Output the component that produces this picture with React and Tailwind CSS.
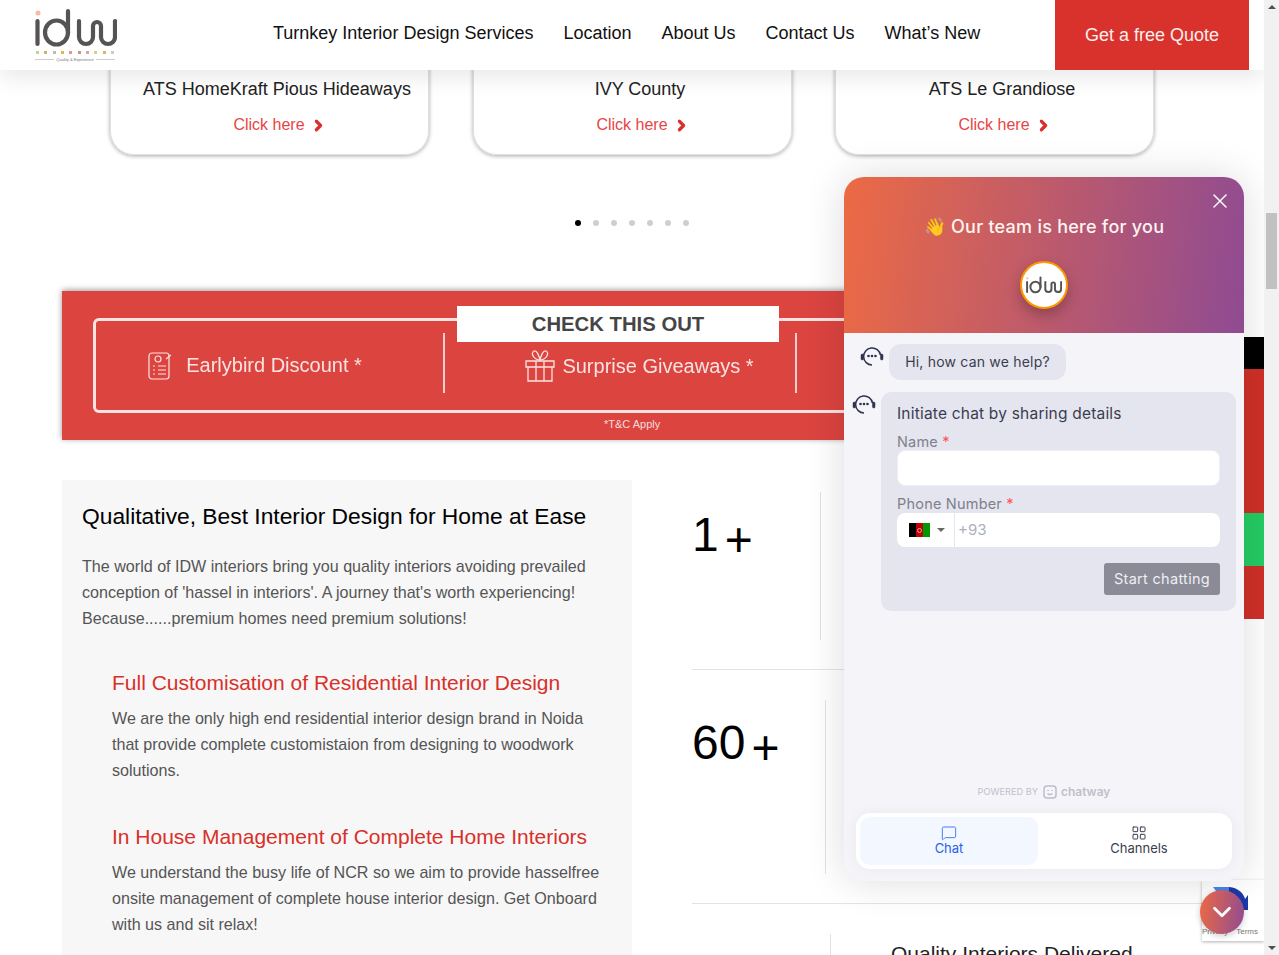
import { ChevronRight, ChevronDown, X, MessageSquare, LayoutGrid } from 'lucide-react';

const sans = "font-['Liberation_Sans',Arial,sans-serif]";
const chatFont = "font-['Inter','Noto_Sans',sans-serif]";

const navItems = ['Turnkey Interior Design Services', 'Location', 'About Us', 'Contact Us', 'What’s New'];
const projects = ['ATS HomeKraft Pious Hideaways', 'IVY County', 'ATS Le Grandiose'];

const IdwLogo = ({ className, strokeWidth = 4.2 }) => (
  <svg viewBox="0 0 82 40" className={className} fill="none" stroke="#555353" strokeWidth={strokeWidth} strokeLinecap="round">
    <circle cx="3" cy="5" r="2.500" fill="#f8b9a5" stroke="none" />
    <path d="M2.500 13v23" />
    <path d="M33 3v22" />
    <ellipse cx="21.500" cy="24.500" rx="11.500" ry="12" />
    <path d="M44 13v16a7 7 0 0 0 14 0V18a4 4 0 0 1 8 0v11a7 7 0 0 0 14 0V13" />
  </svg>
);

const Agent = ({ className }) => (
  <svg viewBox="0 0 24 24" className={className} fill="none" stroke="#2d3350">
    <path d="M20.500 11A8.500 8.500 0 1 0 12 21" strokeWidth="1.500" />
    <rect x="1" y="10" width="2.500" height="6" rx="1.200" fill="#2d3350" strokeWidth="0.500" />
    <rect x="20.500" y="10" width="2.500" height="6" rx="1.200" fill="#2d3350" strokeWidth="0.500" />
    <circle cx="8.500" cy="12" r="1.300" fill="#2d3350" stroke="none" />
    <circle cx="12" cy="12" r="1.300" fill="#2d3350" stroke="none" />
    <circle cx="15.500" cy="12" r="1.300" fill="#2d3350" stroke="none" />
  </svg>
);

const Stat = ({ value, line, title, className }) => (
  <div className={`flex ${className}`}>
    <div className={`flex items-start text-[48px] leading-none text-black ${line}`}>
      {value && <span className="mt-[19px]">{value}</span>}
      {value && <span className="ml-[6px] mt-[24px]">+</span>}
    </div>
    <div className="w-px h-full bg-[#e1e1e1]" />
    {title && <div className="ml-[60px] text-[21px] text-[#222] mt-[8px] leading-[24px]">{title}</div>}
  </div>
);

const Feature = ({ title, children, className }) => (
  <div className={`pl-[30px] pr-[10px] ${className}`}>
    <h4 className="text-[21px] leading-[26px] text-[#d9302a]">{title}</h4>
    <p className="mt-[9px] text-[16.100px] leading-[26px] text-[#555]">{children}</p>
  </div>
);

const ChatWidget = () => (
  <div className={`absolute left-[844px] top-[177px] z-30 flex h-[704px] w-[400px] flex-col overflow-hidden rounded-[20px] bg-[#f5f5f9] shadow-[0_0_40px_rgba(0,0,0,0.14)] ${chatFont}`}>
    <div className="relative flex h-[156px] shrink-0 flex-col items-center bg-[linear-gradient(97deg,#ec6a44,#8f4b92)]">
      <X className="absolute right-[12px] top-[12px] text-white" size={24} strokeWidth={1.500} />
      <div className="mt-[38px] text-[18px] leading-[24px] font-medium tracking-[0.25px] text-[#fdf3f1]">👋 Our team is here for you</div>
      <div className="mt-[22px] flex h-[48px] w-[48px] items-center justify-center rounded-full border-2 border-[#ff9800] bg-white shadow-[0_6px_14px_rgba(0,0,0,0.25)]">
        <IdwLogo className="h-[18px] w-[36px]" strokeWidth={4.500} />
      </div>
    </div>
    <div className="flex items-start pl-[16px] pt-[11px]">
      <Agent className="h-[24px] w-[24px]" />
      <div className="ml-[5px] flex h-[36px] w-[177px] items-center justify-center rounded-[12px] bg-[#e5e5ef] pb-[1px] text-[14px] tracking-[0.2px] text-[#3b3d4f]">Hi, how can we help?</div>
    </div>
    <div className="mt-[12px] flex items-start pl-[8px]">
      <Agent className="h-[24px] w-[24px]" />
      <div className="ml-[5px] h-[219px] w-[355px] rounded-[10px] bg-[#e5e5ef] px-[16px] pt-[12px]">
        <div className="text-[15.500px] leading-[20px] tracking-[0.2px] text-[#3b3d4f]">Initiate chat by sharing details</div>
        <div className="mt-[8px] text-[14.500px] leading-[20px] tracking-[0.2px] text-[#80808a]">Name <span className="text-[#f55]">*</span></div>
        <div className="-mt-[2px] h-[36px] rounded-[8px] border border-[#eeeef5] bg-white" />
        <div className="mt-[8px] text-[14.500px] leading-[20px] tracking-[0.2px] text-[#80808a]">Phone Number <span className="text-[#f55]">*</span></div>
        <div className="-mt-[1px] flex h-[34px] rounded-[8px] bg-white">
          <div className="flex w-[58px] items-center border-r border-[#e5e5ef] pl-[12px]">
            <div className="flex h-[14px] w-[21px] items-center">
              <div className="h-full w-[7px] bg-black" />
              <div className="flex h-full w-[7px] items-center justify-center bg-[#be0000]">
                <span className="h-[5px] w-[5px] rounded-full border border-[#e9a0a0]" />
              </div>
              <div className="h-full w-[7px] bg-[#009a00]" />
            </div>
            <div className="ml-[7px] h-0 w-0 border-x-[4px] border-t-[4px] border-x-transparent border-t-[#666]" />
          </div>
          <div className="ml-[3px] flex items-center text-[15px] text-[#aeaec0]">+93</div>
        </div>
        <div className="mt-[16px] flex justify-end">
          <div className="flex h-[32px] w-[116px] items-center justify-center rounded-[3px] bg-[#8a8b97] text-[14.500px] tracking-[0.3px] text-[#eeeef3]">Start chatting</div>
        </div>
      </div>
    </div>
    <div className="mt-auto flex items-center justify-center text-[#c0c0cb]">
      <span className="text-[9.200px]">POWERED BY</span>
      <svg viewBox="0 0 16 16" className="ml-[4px] h-[16px] w-[16px]" fill="none" stroke="#bdbdc9" strokeWidth="1.500">
        <rect x="2" y="2" width="12" height="12" rx="3" />
        <path d="M5.500 9.500c1.500 1.300 3.500 1.300 5 0" />
        <path d="M6 6v1M10 6v1" />
      </svg>
      <span className="ml-[3px] text-[12px] font-semibold">chatway</span>
    </div>
    <div className="mx-[12px] mb-[12px] mt-[12px] flex h-[56px] rounded-[14px] bg-white p-[4px] shadow-[0_0_14px_rgba(0,0,0,0.05)]">
      <div className="flex w-[178px] flex-col items-center justify-center rounded-[10px] bg-[#f3f7ff] pb-[2px] text-[13px] leading-[15px] text-[#2563eb]">
        <MessageSquare size={16} strokeWidth={1.500} className="text-[#4a7df0]" />
        <span>Chat</span>
      </div>
      <div className="flex flex-1 flex-col items-center justify-center pb-[2px] pl-[12px] text-[13px] leading-[15px] text-[#3b3d4f]">
        <LayoutGrid size={16} strokeWidth={1.500} />
        <span>Channels</span>
      </div>
    </div>
  </div>
);

export default function App() {
  return (
    <div className={`flex h-[955px] w-[1279px] overflow-hidden bg-white ${sans}`}>
      <div className="relative h-full w-[1264px] shrink-0 overflow-hidden">
        <header className="relative z-20 flex h-[70px] items-center bg-white pr-[15px] shadow-[0_6px_24px_rgba(0,0,0,0.1)]">
          <div className="ml-[35px] flex w-[238px] flex-col self-start pt-[8px]">
            <IdwLogo className="h-[40px] w-[82px]" />
            <div className="mt-[3px] flex w-[80px] justify-between px-[1px]">
              {['#c5cf9a', '#c9b86a', '#bbb', '#e8b24e', '#d99', '#b99', '#caa', '#ecc97a', '#ddb45f', '#ccc'].map((c, i) => (
                <span key={i} className="h-[3px] w-[3px]" style={{ backgroundColor: c }} />
              ))}
            </div>
            <div className="mt-[3px] flex w-[80px] items-center gap-[2px] text-[4px] leading-[5px] text-[#777]">
              <span className="h-px flex-1 bg-[#ccc]" />
              Quality &amp; Experience
              <span className="h-px flex-1 bg-[#ccc]" />
            </div>
          </div>
          <nav className="mb-[4px] flex gap-[30px] text-[18px] text-[#111]">
            {navItems.map((n) => <span key={n}>{n}</span>)}
          </nav>
          <div className="ml-auto flex h-full w-[194px] items-center justify-center bg-[#d9322c] text-[18px] text-[#fbeeee]">Get a free Quote</div>
        </header>

        <section className="flex pl-[110px]">
          {projects.map((p, i) => (
            <div key={p} className={`-mt-[40px] flex h-[125px] w-[319px] flex-col items-center justify-end rounded-[24px] border border-[#e0e0e0] pb-[19px] pl-[15px] shadow-[0_1px_4px_rgba(0,0,0,0.35)] ${i === 0 ? '' : i === 1 ? 'ml-[44px]' : 'ml-[43px]'}`}>
              <div className="text-[18px] leading-[22px] text-[#222]">{p}</div>
              <div className="ml-[6px] mt-[15px] flex items-center text-[16px] leading-[20px] text-[#e84545]">
                Click here
                <ChevronRight size={17} strokeWidth={4.500} className="ml-[5px] text-[#d9302a]" />
              </div>
            </div>
          ))}
        </section>

        <div className="mt-[65px] flex w-[1264px] justify-center gap-[12px]">
          {[0, 1, 2, 3, 4, 5, 6].map((d) => (
            <span key={d} className={`h-[6px] w-[6px] rounded-full ${d === 0 ? 'bg-black' : 'bg-[#cfcfcf]'}`} />
          ))}
        </div>

        <div className="mx-[62px] mt-[65px] h-[149px] w-[1140px] bg-[#dc4440] px-[31px] pt-[27px] shadow-[0_-1px_6px_rgba(0,0,0,0.4)]">
          <div className="relative flex h-[95px] items-center rounded-[6px] border-[3px] border-[#f7e4e2]">
            <div className="absolute left-[361px] top-[-15px] flex h-[36px] w-[322px] items-center justify-center bg-white text-[20.300px] font-bold text-[#454545]">CHECK THIS OUT</div>
            <div className="mb-[6px] flex h-[60px] w-[349px] items-center justify-center border-r-2 border-[#f0cfcc] pr-[30px] pt-[4px] text-[20px] text-[#f9e4e2] blur-[0.3px]">
              <svg viewBox="0 0 26 30" className="mr-[13px] h-[30px] w-[26px]" fill="none" stroke="#f9e4e2" strokeWidth="1.200">
                <rect x="2" y="3" width="20" height="26" rx="3" />
                <circle cx="11" cy="9" r="3" />
                <path d="M6 16h2M6 20h2M6 24h2M11 16h8M11 20h8M11 24h8M19 9l5-4" />
              </svg>
              Earlybird Discount *
            </div>
            <div className="mb-[6px] flex h-[60px] w-[352px] items-center justify-center border-r-2 border-[#f0cfcc] pl-[38px] pt-[6px] text-[20px] text-[#f9e4e2] blur-[0.3px]">
              <svg viewBox="0 0 32 34" className="mr-[6px] h-[34px] w-[32px]" fill="none" stroke="#f9e4e2" strokeWidth="1.300">
                <path d="M2 12h28v6H2zM4 18h24v14H4zM12 12v20M20 12v20" />
                <path d="M16 11C10 11 6 4 10 2c3-1 5 5 6 9 1-4 3-10 6-9 4 2 0 9-6 9z" />
              </svg>
              Surprise Giveaways *
            </div>
          </div>
          <div className="mt-[4px] pl-[511px] text-[11px] leading-[14px] text-[#f7dedc]">*T&amp;C Apply</div>
        </div>

        <div className="mx-[62px] mt-[40px] flex w-[1140px] items-start">
          <div className="h-[600px] w-[570px] shrink-0 bg-[#f7f7f7] px-[20px] pt-[22px]">
            <h3 className="text-[22.800px] leading-[28px] text-black">Qualitative, Best Interior Design for Home at Ease</h3>
            <p className="mt-[23px] text-[16.100px] leading-[26px] text-[#555]">
              The world of IDW interiors bring you quality interiors avoiding prevailed conception of 'hassel in interiors'. A journey that's worth experiencing! Because......premium homes need premium solutions!
            </p>
            <Feature title="Full Customisation of Residential Interior Design" className="mt-[39px]">
              We are the only high end residential interior design brand in Noida that provide complete customistaion from designing to woodwork solutions.
            </Feature>
            <Feature title="In House Management of Complete Home Interiors" className="mt-[41px]">
              We understand the busy life of NCR so we aim to provide hasselfree onsite management of complete house interior design. Get Onboard with us and sit relax!
            </Feature>
          </div>
          <div className="ml-[60px] w-[510px]">
            <Stat value="1" line="w-[128px]" className="mt-[12px] h-[148px]" />
            <div className="mt-[29px] h-px bg-[#e3e3e3]" />
            <Stat value="60" line="w-[133px]" className="mt-[30px] h-[174px]" />
            <div className="mt-[29px] h-px bg-[#e3e3e3]" />
            <Stat line="w-[138px]" className="mt-[30px] h-[100px]" title="Quality Interiors Delivered" />
          </div>
        </div>

        <div className="absolute right-0 top-[337px] z-10 flex w-[20px] flex-col">
          <div className="h-[32px] bg-black" />
          <div className="h-[144px] bg-[#cf3028]" />
          <div className="h-[53px] bg-[#25cc64]" />
          <div className="h-[53px] bg-[#cf3028]" />
        </div>

        <div className="absolute left-[1202px] top-[880px] z-10 h-[61px] w-[62px] bg-white shadow-[0_1px_3px_rgba(0,0,0,0.3)]">
          <svg viewBox="0 0 40 30" className="ml-[10px] mt-[5px] h-[30px] w-[40px]">
            <path d="M1 2h17v8H7z" fill="#4a86f0" />
            <path d="M17 2c10 1 15 7 16 12l3-4v15H22l5-5c-2-6-6-9-10-10z" fill="#1c3aa9" />
          </svg>
          <div className="absolute bottom-[4px] left-0 flex w-full justify-between pr-[6px] text-[8px] leading-[10px] text-[#777]">
            <span>Privacy</span><span>Terms</span>
          </div>
        </div>

        <ChatWidget />

        <div className="absolute left-[1200px] top-[890px] z-30 flex h-[44px] w-[44px] items-center justify-center rounded-full bg-[linear-gradient(97deg,#ec6a44,#8f4b92)] shadow-[0_2px_6px_rgba(0,0,0,0.2)]">
          <ChevronDown className="text-white" size={30} strokeWidth={2.200} />
        </div>
      </div>

      <div className="flex h-full w-[15px] shrink-0 flex-col items-center bg-[#f1f1f1]">
        <div className="mt-[5px] h-0 w-0 border-x-[4px] border-b-[4px] border-x-transparent border-b-[#505050]" />
        <div className="mt-[204px] h-[76px] w-[11px] bg-[#c1c1c1]" />
        <div className="mt-auto mb-[5px] h-0 w-0 border-x-[4px] border-t-[4px] border-x-transparent border-t-[#505050]" />
      </div>
    </div>
  );
}
